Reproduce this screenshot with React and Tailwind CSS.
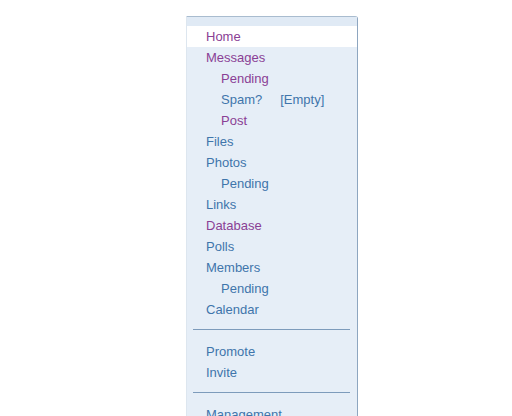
import React from 'react';

const purple = 'text-[#8a3f95]';
const blue = 'text-[#3f75ab]';

const items = [
    { label: 'Home', color: purple, active: true },
    { label: 'Messages', color: purple },
    { label: 'Pending', color: purple, sub: true },
    { label: 'Spam?', color: blue, sub: true, extra: '[Empty]' },
    { label: 'Post', color: purple, sub: true },
    { label: 'Files', color: blue },
    { label: 'Photos', color: blue },
    { label: 'Pending', color: blue, sub: true },
    { label: 'Links', color: blue },
    { label: 'Database', color: purple },
    { label: 'Polls', color: blue },
    { label: 'Members', color: blue },
    { label: 'Pending', color: blue, sub: true },
    { label: 'Calendar', color: blue },
];

function Row({ item }) {
    return (
        <div className={`h-[21px] flex items-center ${item.active ? 'bg-white' : ''} ${item.sub ? 'pl-[34px]' : 'pl-[19px]'}`}>
            <span className={item.color}>{item.label}</span>
            {item.extra && <span className={`${blue} ml-[18px]`}>{item.extra}</span>}
        </div>
    );
}

export default function App() {
    return (
        <div className="w-[512px] h-[416px] bg-white overflow-hidden font-['Liberation_Sans',Arial,sans-serif] text-[13px] leading-none">
            <div className="ml-[186px] mt-[16px] w-[172px] h-[420px] bg-[#e6eef7] border-t border-r border-l border-t-[#a9bccf] border-r-[#8ea6c0] border-l-[#dde6ef] rounded-tr-[3px]">
                <div className="h-[9px] bg-[#e0eaf5]" />
                {items.map((item, i) => (
                    <Row key={i} item={item} />
                ))}
                <div className="ml-[6px] mr-[7px] mt-[9px] border-t border-[#7d9bbb]" />
                <div className="mt-[11px]">
                    <Row item={{ label: 'Promote', color: blue }} />
                    <Row item={{ label: 'Invite', color: blue }} />
                </div>
                <div className="ml-[6px] mr-[7px] mt-[9px] border-t border-[#7d9bbb]" />
                <div className="mt-[11px]">
                    <Row item={{ label: 'Management', color: blue }} />
                </div>
            </div>
        </div>
    );
}
